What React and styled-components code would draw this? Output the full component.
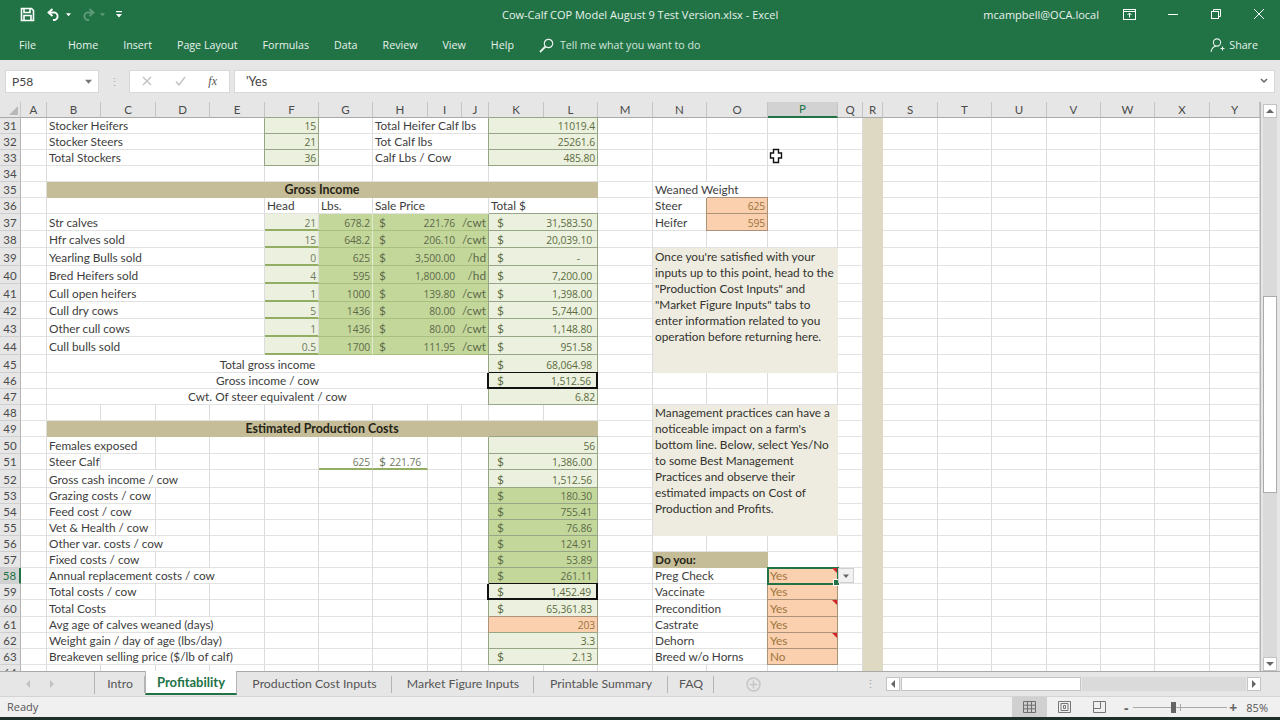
import React from 'react';
import styled, { createGlobalStyle, css } from 'styled-components';

const GlobalStyle = createGlobalStyle`
  html, body {
    margin: 0;
    padding: 0;
    background: #e6e6e6;
  }
  #root {
    width: 1280px;
    height: 720px;
    overflow: hidden;
  }
`;

const COLS = [
  ['A', 26], ['B', 54], ['C', 55], ['D', 54], ['E', 55], ['F', 54], ['G', 54], ['H', 55], ['I', 34],
  ['J', 27], ['K', 55], ['L', 54], ['M', 55], ['N', 54], ['O', 61], ['P', 70], ['Q', 25], ['R', 20],
  ['S', 55], ['T', 54], ['U', 55], ['V', 54], ['W', 54], ['X', 55], ['Y', 50],
];
const NAMES = COLS.map(col => col[0]);
const HEIGHTS = [16, 16, 16, 16, 16, 16, 17, 17, 18, 18, 18, 17, 18, 18, 18, 16, 16, 16, 16, 17, 16, 18, 16, 16, 16, 16, 16, 16, 16, 17, 16, 16, 16, 16];

const Page = styled.div`
  width: 1280px;
  height: 720px;
  display: flex;
  flex-direction: column;
  font-family: "Open Sans", "Liberation Sans", sans-serif;
  background: #e6e6e6;
`;

const TitleBar = styled.div`
  height: 30px;
  flex: none;
  box-sizing: border-box;
  padding-bottom: 2px;
  display: grid;
  grid-template-columns: 1fr 276px 1fr;
  align-items: center;
  background: #217346;
  color: #e8f1ec;
  font-size: 11px;
`;

const QuickAccess = styled.div`
  display: flex;
  align-items: center;
  padding-left: 20px;
`;

const QuickItem = styled.span`
  display: flex;
  margin-right: ${p => p.$after}px;
`;

const DocTitle = styled.div`
  white-space: nowrap;
  text-align: center;
`;

const WindowControls = styled.div`
  display: flex;
  align-items: center;
  justify-content: flex-end;
`;

const Account = styled.span`
  margin-right: 9px;
`;

const WindowButton = styled.span`
  width: 43px;
  display: flex;
  justify-content: center;
`;

const Ribbon = styled.div`
  height: 30px;
  flex: none;
  display: flex;
  align-items: center;
  gap: 25px;
  padding: 0 22px 0 19px;
  background: #217346;
  color: #e8f1ec;
  font-size: 10.7px;
`;

const RibbonTab = styled.span`
  white-space: nowrap;
  margin-right: ${p => p.$after || 0}px;
`;

const TellMe = styled.span`
  display: flex;
  align-items: center;
  gap: 6px;
  color: #d5e5dc;
`;

const Share = styled.span`
  margin-left: auto;
  display: flex;
  align-items: center;
  gap: 4px;
`;

const FormulaBar = styled.div`
  height: 42px;
  flex: none;
  display: flex;
  align-items: center;
  padding: 0 5px;
  background: #e6e6e6;
`;

const NameBox = styled.div`
  width: 94px;
  height: 23px;
  box-sizing: border-box;
  display: flex;
  align-items: center;
  justify-content: space-between;
  padding: 0 6px;
  background: #fff;
  border: 1px solid #d8d8d8;
  color: #444;
  font: 12px Lato, sans-serif;
`;

const Grip = styled.div`
  width: 30px;
  text-align: center;
  color: #a8a8a8;
  font-size: 11px;
`;

const FormulaButtons = styled.div`
  width: 101px;
  height: 23px;
  box-sizing: border-box;
  display: flex;
  align-items: center;
  justify-content: space-between;
  padding: 0 12px;
  background: #fff;
  border: 1px solid #d8d8d8;
  margin-right: 4px;
`;

const Fx = styled.span`
  color: #555;
  font: italic 12px "Liberation Serif", serif;
`;

const FormulaInput = styled.div`
  flex: 1;
  height: 23px;
  box-sizing: border-box;
  display: flex;
  align-items: center;
  justify-content: space-between;
  padding: 0 6px 0 11px;
  background: #fff;
  border: 1px solid #d8d8d8;
  color: #444;
  font: 12.6px Lato, sans-serif;
`;

const Main = styled.div`
  height: 569px;
  flex: none;
  display: flex;
`;

const SheetFrame = styled.div`
  position: relative;
  width: 1261px;
  flex: none;
  overflow: hidden;
  border-right: 1px solid #b4b4b4;
  box-sizing: border-box;
`;

const Grid = styled.div`
  display: grid;
  grid-template-columns: 21px ${COLS.map(col => `${col[1]}px`).join(' ')};
  grid-template-rows: 16px ${HEIGHTS.map(h => `${h}px`).join(' ')};
  background: #fff;
  font: 11.8px/14px Lato, "Liberation Sans", sans-serif;
  color: #3d3d3d;
`;

const Corner = styled.div`
  background: #e6e6e6;
  border-bottom: 1px solid #a9a9a9;
  border-right: 1px solid #c8c8c8;
  display: flex;
  align-items: flex-end;
  justify-content: flex-end;
  padding: 0 2px 2px 0;
  box-sizing: border-box;
`;

const ColHead = styled.div`
  box-sizing: border-box;
  display: flex;
  align-items: center;
  justify-content: center;
  background: ${p => (p.$active ? '#d2d2d2' : '#e6e6e6')};
  color: ${p => (p.$active ? '#217346' : '#4a4a4a')};
  border-right: 1px solid #c4c4c4;
  border-bottom: ${p => (p.$active ? '2px solid #217346' : '1px solid #a9a9a9')};
  font-size: 11.5px;
`;

const RowHead = styled.div`
  box-sizing: border-box;
  display: flex;
  align-items: flex-end;
  justify-content: center;
  background: ${p => (p.$active ? '#d2d2d2' : '#e6e6e6')};
  color: ${p => (p.$active ? '#217346' : '#4a4a4a')};
  border-right: ${p => (p.$active ? '2px solid #217346' : '1px solid #b4b4b4')};
  border-bottom: 1px solid #cfcfcf;
  font-size: 11.5px;
`;

const boxed = color => css`
  border-right-color: ${color};
  border-bottom-color: ${color};
  box-shadow: -1px 0 0 ${color}, 0 -1px 0 ${color};
`;

const KINDS = {
  plain: css``,
  boxed: css`
    background: #ebf1de;
    color: #5c6c40;
    ${boxed('#98a688')}
  `,
  head: css`
    background: #ebf1de;
    color: #6f7a5f;
    line-height: 12px;
    border-bottom: 2px solid #93ad62;
  `,
  bright: css`
    background: #c4d79b;
    color: #5d6a4a;
    border-right-color: #c4d79b;
    border-bottom-color: #a9bf80;
  `,
  brightEnd: css`
    background: #c4d79b;
    color: #5d6a4a;
    border-right-color: #e2ebcd;
    border-bottom-color: #a9bf80;
  `,
  brightBox: css`
    background: #c4d79b;
    color: #5d6a4a;
    ${boxed('#98a688')}
  `,
  total: css`
    background: #ebf1de;
    color: #5c6c40;
    line-height: 12px;
    border-right: 2px solid #111;
    border-bottom: 2px solid #111;
    box-shadow: -2px 0 0 #111, 0 -1px 0 #111;
    z-index: 1;
  `,
  orange: css`
    background: #fbd0ae;
    color: #9a7440;
    ${boxed('#ab9278')}
  `,
  band: css`
    background: #c4bd97;
    color: #262416;
    font-size: 12.4px;
    font-weight: 700;
    border-right-color: #c4bd97;
    border-bottom-color: #c4bd97;
  `,
  tan: css`
    background: #c4bd97;
    color: #262416;
    font-weight: 700;
    border-right-color: #c4bd97;
    border-bottom-color: #c4bd97;
  `,
  note: css`
    align-items: flex-start;
    background: #eeece1;
    color: #33322d;
    white-space: pre-line;
    line-height: 16px;
    border-right-color: #eeece1;
    border-bottom-color: #eeece1;
  `,
  rfill: css`
    background: #ddd9c3;
    border-right-color: #ddd9c3;
    border-bottom-color: #ddd9c3;
  `,
  under: css`
    color: #6f7a5f;
    line-height: 12px;
    border-bottom: 2px solid #93ad62;
  `,
};

const Cell = styled.div`
  position: relative;
  box-sizing: border-box;
  min-width: 0;
  grid-column: span ${p => p.$span || 1};
  grid-row: span ${p => p.$rows || 1};
  display: flex;
  align-items: flex-end;
  justify-content: ${p => p.$align || 'flex-start'};
  padding: ${p => p.$pad || 0}px 2px 0;
  white-space: nowrap;
  border-right: 1px solid #dcdcdc;
  border-bottom: 1px solid #e2e2e2;
  ${p => KINDS[p.$kind || 'plain']}
  ${p => p.$comment && css`
    &::after {
      content: '';
      position: absolute;
      top: 0;
      right: 0;
      border-top: 5px solid #d4232b;
      border-left: 5px solid transparent;
    }
  `}
  ${p => p.$selected && css`
    z-index: 2;
    outline: 2px solid #217346;
    outline-offset: -1px;
  `}
`;

const Money = styled.span`
  flex: 1;
  display: flex;
  justify-content: space-between;
  padding: 0 ${p => (p.$tight ? 4 : 3)}px 0 ${p => (p.$tight ? 4 : 6)}px;
`;

const Num = styled.span`
  font-family: "Open Sans", sans-serif;
  font-size: 10.3px;
  letter-spacing: -0.1px;
  padding-right: ${p => (p.$dash ? 12 : 0)}px;
`;

const FillHandle = styled.span`
  position: absolute;
  right: -3px;
  bottom: -3px;
  width: 5px;
  height: 5px;
  background: #217346;
  border: 1px solid #fff;
`;

const DropButton = styled.span`
  position: absolute;
  left: calc(100% + 1px);
  top: 0;
  width: 16px;
  height: 15px;
  box-sizing: border-box;
  display: flex;
  align-items: center;
  justify-content: center;
  background: #f2f2f2;
  border: 1px solid #cfcfcf;
`;

const Cursor = styled.span`
  position: absolute;
  left: 769px;
  top: 46px;
  z-index: 3;
  display: flex;
`;

const VScroll = styled.div`
  flex: 1;
  display: flex;
  flex-direction: column;
  padding: 2px 3px 0 2px;
`;

const ScrollButton = styled.span`
  flex: none;
  width: 14px;
  height: 14px;
  box-sizing: border-box;
  display: flex;
  align-items: center;
  justify-content: center;
  background: #fff;
  border: 1px solid #c4c4c4;
`;

const VTrack = styled.div`
  flex: none;
  height: ${p => p.$h}px;
  background: ${p => (p.$thumb ? '#fff' : '#dadada')};
  border: ${p => (p.$thumb ? '1px solid #ababab' : 'none')};
  box-sizing: border-box;
  width: 14px;
`;

const TabBar = styled.div`
  height: 26px;
  flex: none;
  box-sizing: border-box;
  display: flex;
  align-items: stretch;
  background: #e6e6e6;
  border-top: 1px solid #a9a9a9;
  border-bottom: 1px solid #d4d4d4;
`;

const TabNav = styled.div`
  width: 94px;
  flex: none;
  display: flex;
  align-items: center;
  gap: 18px;
  padding-left: 25px;
  box-sizing: border-box;
  color: #c2c2c2;
`;

const Tab = styled.div`
  flex: none;
  width: ${p => p.$w}px;
  box-sizing: border-box;
  margin-bottom: 2px;
  display: flex;
  align-items: center;
  justify-content: center;
  font: 12.3px Lato, sans-serif;
  color: #555;
  position: relative;
  border-left: ${p => (p.$first ? '1px solid #b4b4b4' : 'none')};
  ${p => !p.$active && css`
    &::after {
      content: '';
      position: absolute;
      right: 0;
      top: 4px;
      bottom: 1px;
      width: 1px;
      background: #b4b4b4;
    }
  `}
  ${p => p.$active && css`
    background: #fff;
    color: #217346;
    font-size: 13px;
    font-weight: 700;
    margin-top: -1px;
    margin-bottom: 1px;
    border-bottom: 2px solid #217346;
    border-left: 1px solid #b4b4b4;
    border-right: 1px solid #b4b4b4;
  `}
`;

const AddSheet = styled.div`
  width: 78px;
  flex: none;
  display: flex;
  align-items: center;
  justify-content: center;
`;

const TabGrip = styled.div`
  margin-left: 70px;
  width: 16px;
  align-self: center;
  text-align: center;
  color: #9d9d9d;
  font-size: 11px;
  line-height: 10px;
`;

const HScroll = styled.div`
  display: flex;
  align-items: center;
  padding-left: 8px;
  gap: 1px;
`;

const HThumb = styled.div`
  width: 180px;
  height: 14px;
  box-sizing: border-box;
  background: #fff;
  border: 1px solid #c4c4c4;
`;

const HTrack = styled.div`
  width: 164px;
  height: 14px;
  background: #dadada;
`;

const StatusBar = styled.div`
  height: 20px;
  flex: none;
  display: flex;
  align-items: stretch;
  background: #f0f0f0;
  color: #555;
  font: 11px "Open Sans", sans-serif;
`;

const Ready = styled.div`
  padding-left: 7px;
  line-height: 20px;
`;

const Views = styled.div`
  margin-left: auto;
  display: flex;
  align-items: stretch;
`;

const ViewButton = styled.div`
  width: 35px;
  display: flex;
  align-items: center;
  justify-content: center;
  background: ${p => (p.$active ? '#d0d0d0' : 'transparent')};
`;

const ZoomBox = styled.div`
  display: flex;
  align-items: center;
  padding: 0 12px 0 3px;
`;

const ZoomSign = styled.span`
  width: 12px;
  margin-right: 1px;
  text-align: center;
  font-size: 14px;
  font-weight: 700;
  color: #666;
`;

const Slider = styled.div`
  position: relative;
  width: 94px;
  height: 1px;
  background: #aaa;
`;

const SliderThumb = styled.span`
  position: absolute;
  left: 38px;
  top: -5px;
  width: 5px;
  height: 11px;
  background: #666;
`;

const SliderTick = styled.span`
  position: absolute;
  left: 47px;
  top: -3px;
  width: 1px;
  height: 7px;
  background: #aaa;
`;

const ZoomValue = styled.span`
  margin-left: 6px;
`;

const BottomEdge = styled.div`
  height: 3px;
  flex: none;
  background: #1f2f28;
`;

const SaveIcon = () => (
  <svg width="15" height="15" viewBox="0 0 15 15" fill="none" stroke="#fff" strokeWidth="1.6">
    <path d="M1.5 1.5h10l2 2v10h-12z" />
    <path d="M4 1.5v4h6v-4M4 13.5v-5h7v5" />
  </svg>
);

const UndoIcon = ({ color, flip }) => (
  <svg width="14" height="13" viewBox="0 0 14 13" fill="none" stroke={color} strokeWidth="1.8" style={flip ? { transform: 'scaleX(-1)' } : undefined}>
    <path d="M5.5 1L1.5 4.5l4 3.5" />
    <path d="M2 4.5h6a4 4 0 0 1 0 7.5H6" />
  </svg>
);

const Caret = ({ color = '#fff', size = 5 }) => (
  <svg width={size} height={size} viewBox="0 0 6 6" fill={color}>
    <path d="M0 1.5h6L3 5z" />
  </svg>
);

const Customize = () => (
  <svg width="8" height="8" viewBox="0 0 8 8" fill="#fff">
    <rect x="1" y="1" width="6" height="1.2" />
    <path d="M1 4h6L4 7.5z" />
  </svg>
);

const RibbonDisplay = () => (
  <svg width="13" height="11" viewBox="0 0 13 11" fill="none" stroke="#fff">
    <rect x="0.5" y="0.5" width="12" height="10" />
    <path d="M0.5 2.5h12M6.5 8.5v-4M4.5 6l2-2 2 2" />
  </svg>
);

const Minimize = () => (
  <svg width="10" height="10" viewBox="0 0 10 10" stroke="#fff"><path d="M0 5.5h10" /></svg>
);

const Restore = () => (
  <svg width="10" height="10" viewBox="0 0 10 10" fill="none" stroke="#fff">
    <rect x="0.5" y="2.5" width="7" height="7" />
    <path d="M2.5 2.5v-2h7v7h-2" />
  </svg>
);

const Close = () => (
  <svg width="10" height="10" viewBox="0 0 10 10" stroke="#fff"><path d="M0 0l10 10M10 0L0 10" /></svg>
);

const SearchIcon = () => (
  <svg width="15" height="15" viewBox="0 0 15 15" fill="none" stroke="#e8f1ec" strokeWidth="1.2">
    <circle cx="9.5" cy="5.5" r="4.2" />
    <path d="M6.5 8.5L1 14" strokeWidth="1.8" />
  </svg>
);

const ShareIcon = () => (
  <svg width="15" height="15" viewBox="0 0 15 15" fill="none" stroke="#e8f1ec" strokeWidth="1.1">
    <circle cx="7" cy="4.5" r="3.6" />
    <path d="M1 14c.5-3 2.4-5.5 5-5.8M10.5 10.5h4M12.5 8.5v4" />
  </svg>
);

const CrossIcon = () => (
  <svg width="10" height="10" viewBox="0 0 10 10" stroke="#c4c4c4" strokeWidth="1.5"><path d="M1 1l8 8M9 1L1 9" /></svg>
);

const CheckIcon = () => (
  <svg width="11" height="10" viewBox="0 0 11 10" fill="none" stroke="#c4c4c4" strokeWidth="1.5"><path d="M1 5.5l3 3.5 6-8" /></svg>
);

const Chevron = () => (
  <svg width="8" height="6" viewBox="0 0 8 6" fill="none" stroke="#666" strokeWidth="1.5"><path d="M1 1l3 3 3-3" /></svg>
);

const Arrow = ({ dir, color = '#666' }) => {
  const shapes = { up: 'M0 5h8L4 1z', down: 'M0 1h8L4 5z', left: 'M5 0v8L1 4z', right: 'M1 0v8l4-4z' };
  const upright = dir === 'up' || dir === 'down';
  return (
    <svg width={upright ? 8 : 6} height={upright ? 6 : 8} viewBox={upright ? '0 0 8 6' : '0 0 6 8'} fill={color}>
      <path d={shapes[dir]} />
    </svg>
  );
};

const CornerMark = () => (
  <svg width="9" height="9" viewBox="0 0 9 9" fill="#b8b8b8"><path d="M9 0v9H0z" /></svg>
);

const PlusCircle = () => (
  <svg width="15" height="15" viewBox="0 0 15 15" fill="none" stroke="#c6c6c6" strokeWidth="1.5">
    <circle cx="7.5" cy="7.5" r="6.5" />
    <path d="M7.5 3.5v8M3.5 7.5h8" />
  </svg>
);

const NormalView = () => (
  <svg width="13" height="12" viewBox="0 0 13 12" fill="none" stroke="#6e6e6e">
    <path d="M.5.5h12v11H.5zM.5 4.2h12M.5 7.8h12M4.5.5v11M8.5.5v11" />
  </svg>
);

const LayoutView = () => (
  <svg width="13" height="12" viewBox="0 0 13 12" fill="none" stroke="#777">
    <path d="M.5.5h12v11H.5z" />
    <path d="M3 2.5h7v7H3zM5.5 4.5h2v3h-2z" />
  </svg>
);

const BreakView = () => (
  <svg width="13" height="12" viewBox="0 0 13 12" fill="none" stroke="#777">
    <path d="M.5.5h12v11H.5zM.5 7.5h7v-7" />
  </svg>
);

const OpenCross = () => (
  <svg width="14" height="16" viewBox="0 0 14 16" fill="#fff" stroke="#111" strokeWidth="1.4">
    <path d="M4.5 1.5h5V5h3v5h-3v4.500h-5V10h-3V5h3z" />
  </svg>
);

const cell = (c, t, kind, extra) => ({ c, t, kind, ...extra });
const label = (t, span = 4) => cell('B', t, 'plain', { span });
const right = { align: 'flex-end' };
const money = (c, v, kind, extra) => cell(c, v, kind, { money: true, ...extra });
const sum = (v, kind = 'boxed') => money('K', v, kind, { span: 2 });

const SALES = [
  [37, 'Str calves', '21', '678.2', '221.76', '/cwt', '31,583.50'],
  [38, 'Hfr calves sold', '15', '648.2', '206.10', '/cwt', '20,039.10'],
  [39, 'Yearling Bulls sold', '0', '625', '3,500.00', '/hd', '-'],
  [40, 'Bred Heifers sold', '4', '595', '1,800.00', '/hd', '7,200.00'],
  [41, 'Cull open heifers', '1', '1000', '139.80', '/cwt', '1,398.00'],
  [42, 'Cull dry cows', '5', '1436', '80.00', '/cwt', '5,744.00'],
  [43, 'Other cull cows', '1', '1436', '80.00', '/cwt', '1,148.80'],
  [44, 'Cull bulls sold', '0.5', '1700', '111.95', '/cwt', '951.58'],
];

const ROWS = {
  31: [label('Stocker Heifers'), cell('F', '15', 'boxed', right), cell('H', 'Total Heifer Calf lbs', 'plain', { span: 3 }), cell('K', '11019.4', 'boxed', { span: 2, ...right })],
  32: [label('Stocker Steers'), cell('F', '21', 'boxed', right), cell('H', 'Tot Calf lbs', 'plain', { span: 3 }), cell('K', '25261.6', 'boxed', { span: 2, ...right })],
  33: [label('Total Stockers'), cell('F', '36', 'boxed', right), cell('H', 'Calf Lbs / Cow', 'plain', { span: 3 }), cell('K', '485.80', 'boxed', { span: 2, ...right })],
  34: [label(''), cell('H', '', 'plain', { span: 3 }), cell('K', '', 'plain', { span: 2 })],
  35: [cell('B', 'Gross Income', 'band', { span: 11, align: 'center' }), cell('N', 'Weaned Weight', 'plain', { span: 2 })],
  36: [label(''), cell('F', 'Head'), cell('G', 'Lbs.'), cell('H', 'Sale Price', 'plain', { span: 3 }), cell('K', 'Total $', 'plain', { span: 2 }), cell('N', 'Steer'), cell('O', '625', 'orange', right)],
  37: [cell('N', 'Heifer'), cell('O', '595', 'orange', right)],
  45: [cell('B', 'Total gross income', 'plain', { span: 9, align: 'center' }), sum('68,064.98')],
  46: [cell('B', 'Gross income / cow', 'plain', { span: 9, align: 'center' }), sum('1,512.56', 'total')],
  47: [cell('B', 'Cwt. Of steer equivalent / cow', 'plain', { span: 9, align: 'center' }), cell('K', '6.82', 'boxed', { span: 2, ...right })],
  48: [],
  49: [cell('B', 'Estimated Production Costs', 'band', { span: 11, align: 'center' })],
  50: [label('Females exposed', 2), cell('K', '56', 'boxed', { span: 2, ...right })],
  51: [label('Steer Calf', 1), cell('G', '625', 'under', right), money('H', '221.76', 'under', { tight: true }), sum('1,386.00')],
  52: [label('Gross cash income / cow', 3), sum('1,512.56')],
  53: [label('Grazing costs / cow', 2), sum('180.30', 'brightBox')],
  54: [label('Feed cost / cow', 2), sum('755.41', 'brightBox')],
  55: [label('Vet & Health / cow', 2), sum('76.86', 'brightBox')],
  56: [label('Other var. costs / cow', 3), sum('124.91', 'brightBox')],
  57: [label('Fixed costs / cow', 2), sum('53.89', 'brightBox'), cell('N', 'Do you:', 'tan', { span: 2 })],
  58: [label('Annual replacement costs / cow'), sum('261.11', 'brightBox'), cell('N', 'Preg Check', 'plain', { span: 2 }), cell('P', 'Yes', 'orange', { selected: true, comment: true })],
  59: [label('Total costs / cow', 2), sum('1,452.49', 'total'), cell('N', 'Vaccinate', 'plain', { span: 2 }), cell('P', 'Yes', 'orange')],
  60: [label('Total Costs', 2), sum('65,361.83'), cell('N', 'Precondition', 'plain', { span: 2 }), cell('P', 'Yes', 'orange', { comment: true })],
  61: [label('Avg age of calves weaned (days)'), cell('K', '203', 'orange', { span: 2, ...right }), cell('N', 'Castrate', 'plain', { span: 2 }), cell('P', 'Yes', 'orange')],
  62: [label('Weight gain / day of age (lbs/day)'), cell('K', '3.3', 'boxed', { span: 2, ...right }), cell('N', 'Dehorn', 'plain', { span: 2 }), cell('P', 'Yes', 'orange', { comment: true })],
  63: [label('Breakeven selling price ($/lb of calf)'), sum('2.13'), cell('N', 'Breed w/o Horns', 'plain', { span: 2 }), cell('P', 'No', 'orange')],
  64: [],
};

SALES.forEach(([row, name, head, lbs, price, unit, total]) => {
  ROWS[row] = [
    ...(ROWS[row] || []),
    label(name),
    cell('F', head, 'head', right),
    cell('G', lbs, 'brightEnd', right),
    money('H', price, 'bright', { span: 2, tight: true }),
    cell('J', unit, 'brightEnd', right),
    sum(total),
  ];
});

const FIRST_NOTE = `Once you're satisfied with your
inputs up to this point, head to the
"Production Cost Inputs" and
"Market Figure Inputs" tabs to
enter information related to you
operation before returning here.`;

const SECOND_NOTE = `Management practices can have a
noticeable impact on a farm's
bottom line. Below, select Yes/No
to some Best Management
Practices and observe their
estimated impacts on Cost of
Production and Profits.`;

ROWS[39].push(cell('N', FIRST_NOTE, 'note', { span: 3, rows: 7, pad: 1 }));
ROWS[48].push(cell('N', SECOND_NOTE, 'note', { span: 3, rows: 8 }));

const isNoteRow = row => (row >= 39 && row <= 45) || (row >= 48 && row <= 55);
const isNumber = text => /^[\d.,]+$/.test(text || '');

const renderRow = (row) => {
  const placed = ROWS[row] || [];
  const out = [];
  let i = 0;
  while (i < NAMES.length) {
    const name = NAMES[i];
    const spec = placed.find(item => item.c === name);
    if (spec) {
      let content = spec.t;
      if (spec.money) {
        content = (
          <Money $tight={spec.tight}>
            <span>$</span>
            <Num $dash={spec.t === '-'}>{spec.t}</Num>
          </Money>
        );
      } else if (isNumber(spec.t)) {
        content = <Num>{spec.t}</Num>;
      }
      out.push(
        <Cell
          key={name}
          $kind={spec.kind}
          $span={spec.span}
          $rows={spec.rows}
          $align={spec.align}
          $pad={spec.pad}
          $comment={spec.comment}
          $selected={spec.selected}
        >
          {content}
          {spec.selected && <FillHandle />}
          {spec.selected && <DropButton><Caret color="#666" size={6} /></DropButton>}
        </Cell>,
      );
      i += spec.span || 1;
    } else if (isNoteRow(row) && ['N', 'O', 'P'].includes(name)) {
      i += 1;
    } else {
      out.push(<Cell key={name} $kind={name === 'R' ? 'rfill' : 'plain'} />);
      i += 1;
    }
  }
  return out;
};

const TABS = [
  { name: 'Intro', w: 51, first: true },
  { name: 'Profitability', w: 92, active: true },
  { name: 'Production Cost Inputs', w: 155 },
  { name: 'Market Figure Inputs', w: 142 },
  { name: 'Printable Summary', w: 134 },
  { name: 'FAQ', w: 46 },
];

const App = () => (
  <Page>
    <GlobalStyle />
    <TitleBar>
      <QuickAccess>
        <QuickItem $after={12}><SaveIcon /></QuickItem>
        <QuickItem $after={5}><UndoIcon color="#fff" /></QuickItem>
        <QuickItem $after={10}><Caret /></QuickItem>
        <QuickItem $after={5}><UndoIcon color="#5f9a7b" flip /></QuickItem>
        <QuickItem $after={10}><Caret color="#5f9a7b" /></QuickItem>
        <QuickItem $after={0}><Customize /></QuickItem>
      </QuickAccess>
      <DocTitle>Cow-Calf COP Model August 9 Test Version.xlsx  -  Excel</DocTitle>
      <WindowControls>
        <Account>mcampbell@OCA.local</Account>
        <WindowButton><RibbonDisplay /></WindowButton>
        <WindowButton><Minimize /></WindowButton>
        <WindowButton><Restore /></WindowButton>
        <WindowButton><Close /></WindowButton>
      </WindowControls>
    </TitleBar>
    <Ribbon>
      <RibbonTab $after={7}>File</RibbonTab>
      <RibbonTab>Home</RibbonTab>
      <RibbonTab>Insert</RibbonTab>
      <RibbonTab>Page Layout</RibbonTab>
      <RibbonTab>Formulas</RibbonTab>
      <RibbonTab>Data</RibbonTab>
      <RibbonTab>Review</RibbonTab>
      <RibbonTab>View</RibbonTab>
      <RibbonTab>Help</RibbonTab>
      <TellMe><SearchIcon />Tell me what you want to do</TellMe>
      <Share><ShareIcon />Share</Share>
    </Ribbon>
    <FormulaBar>
      <NameBox>P58<Caret color="#777" size={7} /></NameBox>
      <Grip>⋮</Grip>
      <FormulaButtons>
        <CrossIcon />
        <CheckIcon />
        <Fx>fx</Fx>
      </FormulaButtons>
      <FormulaInput>'Yes<Chevron /></FormulaInput>
    </FormulaBar>
    <Main>
      <SheetFrame>
        <Grid>
          <Corner><CornerMark /></Corner>
          {NAMES.map(name => <ColHead key={name} $active={name === 'P'}>{name}</ColHead>)}
          {HEIGHTS.map((h, idx) => {
            const row = idx + 31;
            return (
              <React.Fragment key={row}>
                <RowHead $active={row === 58}>{row}</RowHead>
                {renderRow(row)}
              </React.Fragment>
            );
          })}
        </Grid>
        <Cursor><OpenCross /></Cursor>
      </SheetFrame>
      <VScroll>
        <ScrollButton><Arrow dir="up" /></ScrollButton>
        <VTrack $h={178} />
        <VTrack $h={197} $thumb />
        <VTrack $h={164} />
        <ScrollButton><Arrow dir="down" /></ScrollButton>
      </VScroll>
    </Main>
    <TabBar>
      <TabNav>
        <Arrow dir="left" color="#c2c2c2" />
        <Arrow dir="right" color="#c2c2c2" />
      </TabNav>
      {TABS.map(tab => <Tab key={tab.name} $w={tab.w} $first={tab.first} $active={tab.active}>{tab.name}</Tab>)}
      <AddSheet><PlusCircle /></AddSheet>
      <TabGrip>⋮</TabGrip>
      <HScroll>
        <ScrollButton><Arrow dir="left" /></ScrollButton>
        <HThumb />
        <HTrack />
        <ScrollButton><Arrow dir="right" /></ScrollButton>
      </HScroll>
    </TabBar>
    <StatusBar>
      <Ready>Ready</Ready>
      <Views>
        <ViewButton $active><NormalView /></ViewButton>
        <ViewButton><LayoutView /></ViewButton>
        <ViewButton><BreakView /></ViewButton>
        <ZoomBox>
          <ZoomSign>-</ZoomSign>
          <Slider><SliderThumb /><SliderTick /></Slider>
          <ZoomSign>+</ZoomSign>
          <ZoomValue>85%</ZoomValue>
        </ZoomBox>
      </Views>
    </StatusBar>
    <BottomEdge />
  </Page>
);

export default App;
